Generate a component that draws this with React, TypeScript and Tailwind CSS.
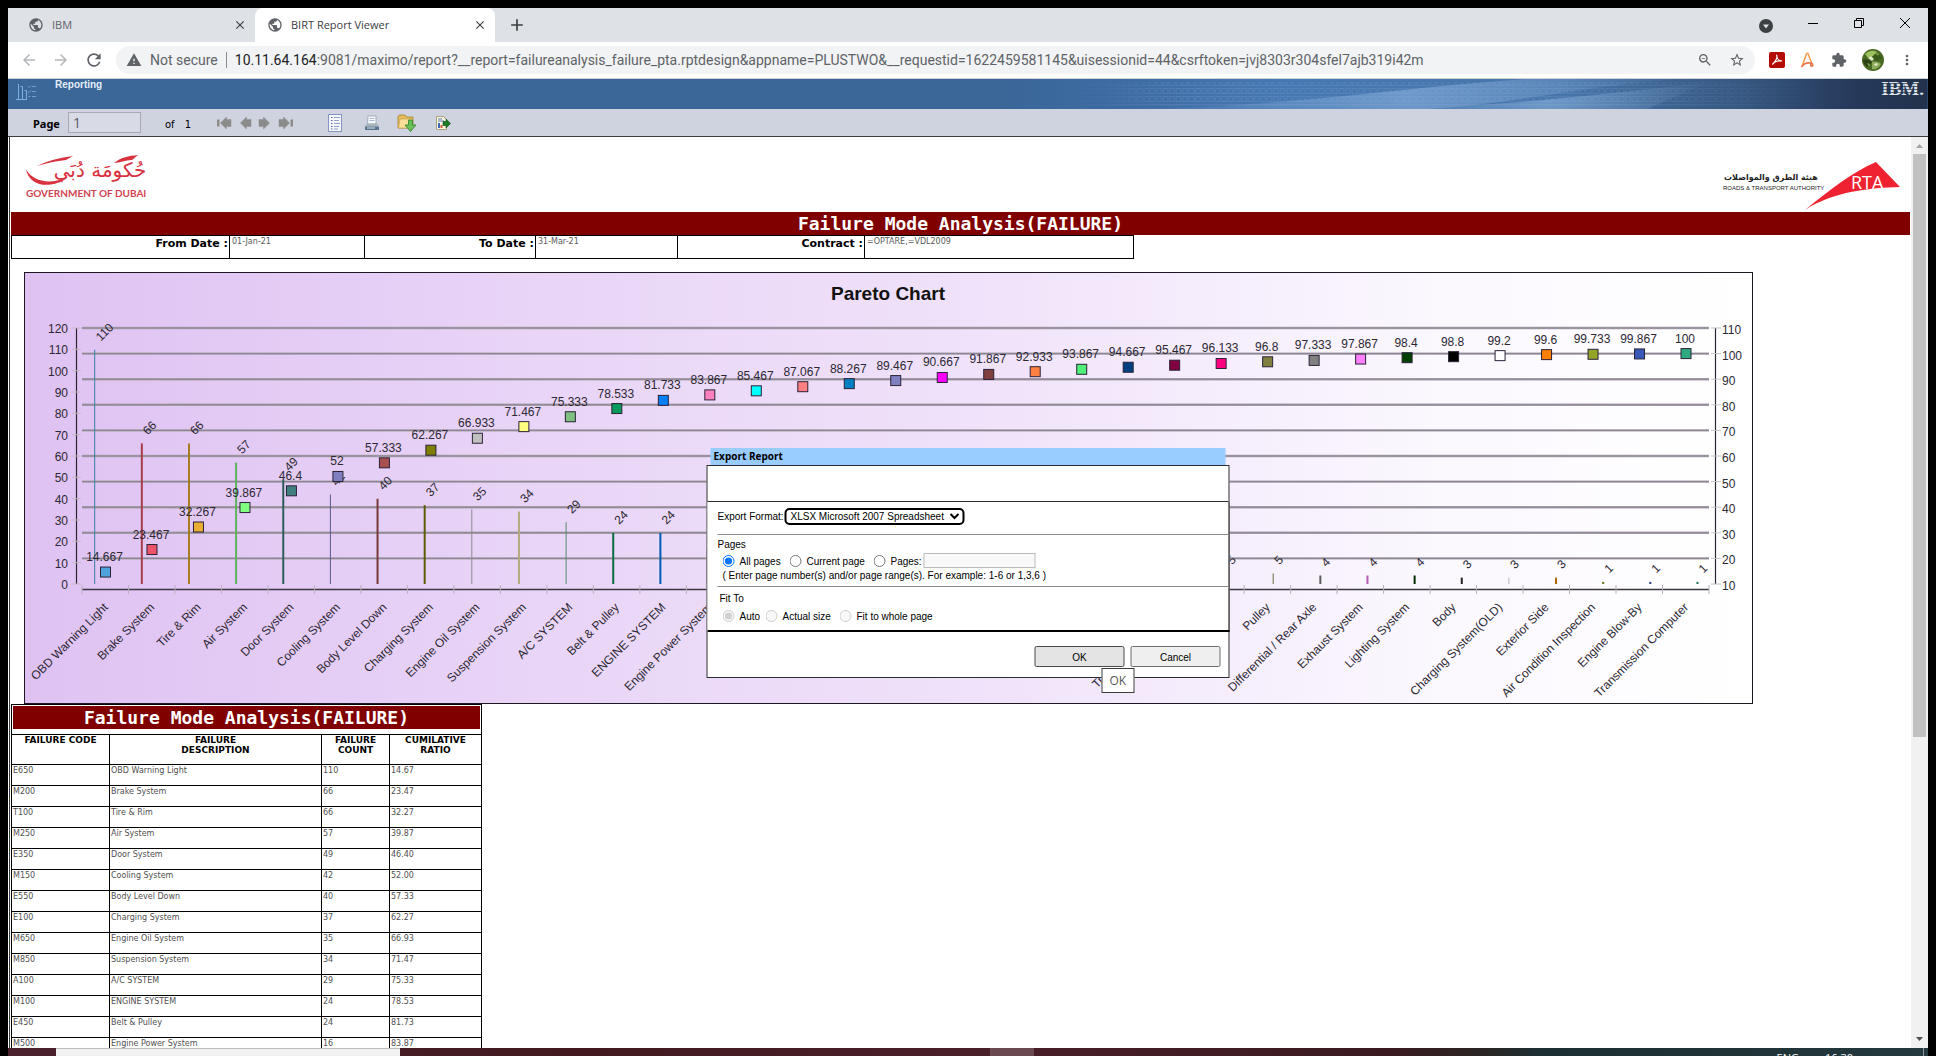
import React from "react";
import {
  MdPublic,
  MdClose,
  MdAdd,
  MdArrowBack,
  MdArrowForward,
  MdRefresh,
  MdWarning,
  MdExtension,
  MdMoreVert,
  MdStarBorder,
  MdZoomOut,
} from "react-icons/md";

type Item = { name: string; count: number; pct: number; color: string; bar: string };

const items: Item[] = [
  { name: "OBD Warning Light", count: 110, pct: 14.667, color: "#4fa3dc", bar: "#3b7ba6" },
  { name: "Brake System", count: 66, pct: 23.467, color: "#f05468", bar: "#a83c4b" },
  { name: "Tire & Rim", count: 66, pct: 32.267, color: "#eaae35", bar: "#a87c24" },
  { name: "Air System", count: 57, pct: 39.867, color: "#80ff80", bar: "#5cb35c" },
  { name: "Door System", count: 49, pct: 46.4, color: "#408080", bar: "#2c5c5c" },
  { name: "Cooling System", count: 42, pct: 52, color: "#8080c0", bar: "#5a5a8c" },
  { name: "Body Level Down", count: 40, pct: 57.333, color: "#a85050", bar: "#783838" },
  { name: "Charging System", count: 37, pct: 62.267, color: "#808000", bar: "#5c5c00" },
  { name: "Engine Oil System", count: 35, pct: 66.933, color: "#c0c0c0", bar: "#8c8c8c" },
  { name: "Suspension System", count: 34, pct: 71.467, color: "#ffff80", bar: "#b3ab7c" },
  { name: "A/C SYSTEM", count: 29, pct: 75.333, color: "#80c080", bar: "#5c8c6c" },
  { name: "Belt & Pulley", count: 24, pct: 78.533, color: "#089a5c", bar: "#056c40" },
  { name: "ENGINE SYSTEM", count: 24, pct: 81.733, color: "#0080ff", bar: "#005cb3" },
  { name: "Engine Power System", count: 16, pct: 83.867, color: "#ff80c0", bar: "#b35c88" },
  { name: "", count: 12, pct: 85.467, color: "#00ffff", bar: "#00b3b3" },
  { name: "", count: 12, pct: 87.067, color: "#ff8080", bar: "#b35c5c" },
  { name: "", count: 9, pct: 88.267, color: "#0080c0", bar: "#005c88" },
  { name: "", count: 9, pct: 89.467, color: "#8080c0", bar: "#5a5a8c" },
  { name: "", count: 9, pct: 90.667, color: "#ff00ff", bar: "#b300b3" },
  { name: "", count: 9, pct: 91.867, color: "#804040", bar: "#5c2c2c" },
  { name: "", count: 8, pct: 92.933, color: "#ff8040", bar: "#b35c2c" },
  { name: "", count: 7, pct: 93.867, color: "#50f078", bar: "#38a854" },
  { name: "", count: 6, pct: 94.667, color: "#004080", bar: "#002c5c" },
  { name: "Transmission System", count: 6, pct: 95.467, color: "#800040", bar: "#5c002c" },
  { name: "", count: 5, pct: 96.133, color: "#ff0080", bar: "#b3005c" },
  { name: "Pulley", count: 5, pct: 96.8, color: "#808040", bar: "#6c6c40" },
  { name: "Differential / Rear Axle", count: 4, pct: 97.333, color: "#808080", bar: "#5c5c5c" },
  { name: "Exhaust System", count: 4, pct: 97.867, color: "#ff80ff", bar: "#b35cb3" },
  { name: "Lighting System", count: 4, pct: 98.4, color: "#004000", bar: "#002c00" },
  { name: "Body", count: 3, pct: 98.8, color: "#000000", bar: "#222222" },
  { name: "Charging System(OLD)", count: 3, pct: 99.2, color: "#ffffff", bar: "#b3b3b3" },
  { name: "Exterior Side", count: 3, pct: 99.6, color: "#ff8000", bar: "#b36400" },
  { name: "Air Condition Inspection", count: 1, pct: 99.733, color: "#94a426", bar: "#68741a" },
  { name: "Engine Blow-By", count: 1, pct: 99.867, color: "#3858b8", bar: "#284084" },
  { name: "Transmission Computer", count: 1, pct: 100, color: "#30a880", bar: "#207858" },
];

const rows: [string, string, string, string][] = [
  ["E650", "OBD Warning Light", "110", "14.67"],
  ["M200", "Brake System", "66", "23.47"],
  ["T100", "Tire & Rim", "66", "32.27"],
  ["M250", "Air System", "57", "39.87"],
  ["E350", "Door System", "49", "46.40"],
  ["M150", "Cooling System", "42", "52.00"],
  ["E550", "Body Level Down", "40", "57.33"],
  ["E100", "Charging System", "37", "62.27"],
  ["M650", "Engine Oil System", "35", "66.93"],
  ["M850", "Suspension System", "34", "71.47"],
  ["A100", "A/C SYSTEM", "29", "75.33"],
  ["M100", "ENGINE SYSTEM", "24", "78.53"],
  ["E450", "Belt & Pulley", "24", "81.73"],
  ["M500", "Engine Power System", "16", "83.87"],
];

const LEFT = 58;
const RIGHT = 1685;
const TOP = 56;
const BOTTOM = 312;
const STEP = (RIGHT - LEFT) / items.length;

function ParetoChart() {
  const leftTicks = Array.from({ length: 13 }, (_, i) => i * 10);
  const rightTicks = Array.from({ length: 11 }, (_, i) => 10 + i * 10);
  const leftY = (v: number) => BOTTOM - (v / 120) * (BOTTOM - TOP);
  const rightY = (v: number) => BOTTOM - ((v - 10) / 100) * (BOTTOM - TOP);
  return (
    <svg
      viewBox="0 0 1729 432"
      className="block w-full font-['Liberation_Sans',Arial,sans-serif] text-[12px]"
      role="img"
      aria-label="Pareto Chart"
    >
      <defs>
        <linearGradient id="chartBg" x1="0" x2="1" y1="0" y2="0">
          <stop offset="0" stopColor="#dfc2f2" />
          <stop offset="0.28" stopColor="#e8d4f7" />
          <stop offset="0.55" stopColor="#f0e2fa" />
          <stop offset="0.82" stopColor="#fbf8fe" />
          <stop offset="1" stopColor="#ffffff" />
        </linearGradient>
      </defs>
      <rect x="0.5" y="0.5" width="1728" height="431" fill="url(#chartBg)" stroke="#1c1822" />
      <text x="864" y="28" textAnchor="middle" className="text-[19px] font-bold" fill="#111">
        Pareto Chart
      </text>

      {rightTicks.slice(1).map((t) => (
        <g key={t}>
          <line x1={LEFT} x2={RIGHT} y1={rightY(t)} y2={rightY(t)} stroke="#aaa2b0" strokeWidth="2.4" />
          <line x1={LEFT} x2={RIGHT} y1={rightY(t)} y2={rightY(t)} stroke="#8a848f" strokeWidth="1" />
        </g>
      ))}

      <line x1="52.5" x2="52.5" y1={TOP} y2={BOTTOM} stroke="#2b2730" strokeWidth="1.2" />
      <line x1="1691.5" x2="1691.5" y1={TOP} y2={BOTTOM} stroke="#2b2730" strokeWidth="1.2" />
      <line x1={LEFT} x2={RIGHT} y1="317.5" y2="317.5" stroke="#3b3740" strokeWidth="1.4" />

      {leftTicks.map((t) => (
        <g key={t}>
          <line x1="48" x2="57" y1={leftY(t)} y2={leftY(t)} stroke="#c4b8c8" />
          <text x="44" y={leftY(t) + 5} textAnchor="end" fill="#2c2833">
            {t}
          </text>
        </g>
      ))}
      {rightTicks.map((t) => (
        <g key={t}>
          <line x1="1687" x2="1697" y1={rightY(t)} y2={rightY(t)} stroke="#c4c0c8" />
          <text x="1698" y={rightY(t) + 6} fill="#2c2833">
            {t}
          </text>
        </g>
      ))}
      {Array.from({ length: items.length + 1 }, (_, i) => (
        <line
          key={i}
          x1={LEFT + i * STEP}
          x2={LEFT + i * STEP}
          y1="313"
          y2="322"
          stroke="#b9b0bd"
        />
      ))}

      {items.map((d, i) => {
        const x = 70.7 + i * 47.14;
        const y = BOTTOM - d.count * 2.13;
        return (
          <g key={i}>
            <line x1={x} x2={x} y1={y} y2={BOTTOM} stroke={d.bar} strokeWidth={i % 5 === 0 || i === 8 ? 1 : 2} />
            <text transform={`translate(${x + 6} ${y - 8}) rotate(-45)`} fill="#2c2833">
              {d.count}
            </text>
          </g>
        );
      })}
      {items.map((d, i) => {
        const x = 81.5 + i * STEP;
        const y = rightY(d.pct);
        return (
          <g key={i}>
            <rect x={x - 5} y={y - 5} width="10" height="10" fill={d.color} stroke="#2a2238" />
            <text x={x - 1} y={y - 11} textAnchor="middle" fill="#2c2833">
              {d.pct}
            </text>
            <text transform={`translate(${x + 3} 336) rotate(-45)`} textAnchor="end" fill="#2c2833">
              {d.name}
            </text>
          </g>
        );
      })}
    </svg>
  );
}

function Tab({ title, active }: { title: string; active?: boolean }) {
  return (
    <div
      className={
        active
          ? "flex w-60 items-center gap-2 rounded-t-lg bg-white pr-2 pl-3 text-[#3c4043]"
          : "flex w-[247px] items-center gap-2 pr-2 pl-5 text-[#5f6368]"
      }
    >
      <MdPublic className="size-4 text-[#5f6368]" />
      <span className="flex-1 text-[11px]">{title}</span>
      <button aria-label={`Close ${title}`}>
        <MdClose className="size-3.5 text-[#3c4043]" />
      </button>
    </div>
  );
}

function BrowserChrome() {
  return (
    <header className="font-['Open_Sans','Noto_Sans',sans-serif]">
      <div className="flex h-[34px] bg-[#dee1e6]">
        <Tab title="IBM" />
        <Tab title="BIRT Report Viewer" active />
        <button aria-label="New tab" className="ml-3">
          <MdAdd className="size-5 text-[#3c4043]" />
        </button>
        <div className="ml-auto flex items-center gap-[34px] pr-[17px] text-black">
          <svg viewBox="0 0 14 14" className="mt-px size-3.5">
            <circle cx="7" cy="7" r="7" fill="#3c4043" />
            <path d="M4 5.500h6L7 9.500z" fill="#dee1e6" />
          </svg>
          <button aria-label="Minimize" className="mb-1">
            <svg viewBox="0 0 12 12" className="size-3">
              <path d="M1 6.500h10" stroke="#000" />
            </svg>
          </button>
          <button aria-label="Restore" className="mb-1">
            <svg viewBox="0 0 12 12" className="size-3" fill="none" stroke="#000">
              <path d="M1.500 3.500h7v7h-7zM3.500 3.500v-2h7v7h-2" />
            </svg>
          </button>
          <button aria-label="Close" className="mb-1">
            <svg viewBox="0 0 12 12" className="size-3" stroke="#000">
              <path d="M1 1l10 10M11 1L1 11" />
            </svg>
          </button>
        </div>
      </div>
      <div className="flex h-[37px] items-center border-b border-[#d0d3d6] bg-white pr-[13px] pl-3 text-[#5f6368]">
        <button aria-label="Back" className="mr-3.5">
          <MdArrowBack className="size-[18px] text-[#b5b8bb]" />
        </button>
        <button aria-label="Forward" className="mr-3.5">
          <MdArrowForward className="size-[18px] text-[#b5b8bb]" />
        </button>
        <button aria-label="Reload" className="mr-3">
          <MdRefresh className="size-5" />
        </button>
        <div className="flex h-7 flex-1 items-center rounded-full bg-[#f1f3f4] px-2.5 font-['Roboto','Open_Sans',sans-serif] text-[14px]">
          <MdWarning className="size-4" />
          <span className="ml-2">Not secure</span>
          <span className="mx-2 h-4 w-px bg-[#8a8d91]" />
          <span className="flex-1">
            <span className="text-[#202124]">10.11.64.164</span>
            :9081/maximo/report?__report=failureanalysis_failure_pta.rptdesign&amp;appname=PLUSTWO&amp;__requestid=1622459581145&amp;uisessionid=44&amp;csrftoken=jvj8303r304sfel7ajb319i42m
          </span>
          <MdZoomOut className="mr-4 size-4" />
          <MdStarBorder className="size-4" />
        </div>
        <div className="ml-3.5 flex items-center gap-[15px]">
          <svg viewBox="0 0 16 16" className="size-4">
            <rect width="16" height="16" rx="2" fill="#b30b00" />
            <path
              d="M7.600 3.200c1 1.800-.3 5-4 9 1.500-2 5.500-3.600 9-3.300-2.500.2-4.600-2.300-5-5.700z"
              fill="none"
              stroke="#fff"
              strokeWidth="1.200"
              strokeLinejoin="round"
            />
          </svg>
          <svg viewBox="0 0 16 16" className="size-4" fill="none" strokeWidth="1.500" strokeLinecap="round">
            <path d="M2 14.500L6.500 2c.4-1 1.300-1 1.700 0l3.600 9.500" stroke="#f59a4a" />
            <path d="M2 14.500c2-3 5-4 8.500-3.500 2 .2 3 2 2 3s-2.500-.5-1.500-2" stroke="#f0704a" />
          </svg>
          <MdExtension className="size-4" />
          <svg viewBox="0 0 22 22" className="size-[22px]">
            <circle cx="11" cy="11" r="11" fill="#4a6a24" />
            <path d="M3 5c4-4 9-4 12-2l-4 4-5 2z" fill="#9cc05c" />
            <path d="M12 6c3-2 6 0 8 3l-5 3-5-2z" fill="#3a5a1c" />
            <path d="M1 11c3-2 6 0 9 2l-4 5c-3-1-5-4-5-7z" fill="#2c4218" />
            <path d="M10 13c4-1 7 0 9 2-2 4-6 6-9 5z" fill="#8cac5c" />
            <path d="M6 9l3-2 3 3-2 2zM12 15l3-1 1 2-3 1z" fill="#e0e8c8" />
            <path d="M14 3l3 2-2 2zM5 14l3 1-1 3z" fill="#7ca044" />
          </svg>
          <MdMoreVert className="size-4" />
        </div>
      </div>
    </header>
  );
}

function Banner() {
  return (
    <div className="relative flex h-[30px] shrink-0 items-start bg-[#3a6698] pl-2">
      <svg viewBox="0 0 920 30" preserveAspectRatio="none" className="absolute inset-y-0 right-0 h-full w-[48%]">
        <defs>
          <linearGradient id="bn" x1="0" x2="1">
            <stop offset="0" stopColor="#3a6698" />
            <stop offset="0.12" stopColor="#3d6ba2" />
            <stop offset="0.3" stopColor="#4678b2" />
            <stop offset="0.6" stopColor="#4775aa" />
            <stop offset="0.8" stopColor="#365780" />
            <stop offset="0.92" stopColor="#26395a" />
            <stop offset="1" stopColor="#22324c" />
          </linearGradient>
          <linearGradient id="sw" x1="0" x2="1">
            <stop offset="0" stopColor="#9cc0e8" stopOpacity="0" />
            <stop offset="0.5" stopColor="#9cc0e8" stopOpacity="0.45" />
            <stop offset="1" stopColor="#9cc0e8" stopOpacity="0" />
          </linearGradient>
          <linearGradient id="fade" x1="0" x2="1">
            <stop offset="0" stopColor="#000" />
            <stop offset="0.15" stopColor="#fff" />
            <stop offset="0.7" stopColor="#fff" />
            <stop offset="1" stopColor="#000" />
          </linearGradient>
          <pattern id="sq" width="6.500" height="8" patternUnits="userSpaceOnUse">
            <rect x="1" y="1.500" width="4.500" height="5" fill="none" stroke="#86aad6" strokeOpacity="0.25" />
          </pattern>
          <mask id="sqMask">
            <rect x="60" width="760" height="30" fill="url(#fade)" />
          </mask>
        </defs>
        <rect width="920" height="30" fill="url(#bn)" />
        <rect x="60" y="3" width="760" height="24" fill="url(#sq)" mask="url(#sqMask)" />
        <path d="M120 30C280 28 380 10 520 0H680C560 8 520 24 420 30z" fill="url(#sw)" />
        <path d="M380 30C520 26 600 14 700 4L640 30z" fill="url(#sw)" />
      </svg>
      <svg viewBox="0 0 20 18" className="mt-1 h-[18px] w-5" fill="none" stroke="#7fb0dc">
        <path d="M2.500 1v16M0 16.500h11M4.500 3.500h2v13M8.500 7.500h2v9" />
        <path d="M12 3.500l1 1 2-2M12 8.500l1 1 2-2M12.500 13.500h2M16 3.500h4M16 8.500h4M16 13.500h4" strokeWidth=".8" />
      </svg>
      <h1 className="ml-[19px] font-['Liberation_Sans',Arial,sans-serif] text-[10px] leading-3 font-bold text-[#e3eef8]">
        Reporting
      </h1>
      <div className="relative mt-0.5 mr-1 ml-auto flex font-['Liberation_Serif',serif] text-[19px] leading-4 font-bold text-[#dfe2e6]">
        IBM.
        <span className="absolute inset-0 bg-[repeating-linear-gradient(180deg,transparent_0_2px,#24354f_2px_3px)] opacity-70" />
      </div>
    </div>
  );
}

function NavArrow({ label, flip, end }: { label: string; flip?: boolean; end?: boolean }) {
  return (
    <button aria-label={label} disabled>
      <svg viewBox="0 0 16 12" className={flip ? "h-3 w-4 -scale-x-100" : "h-3 w-4"} fill="#8b8b8b">
        {end && <path d="M0 2.500h2.500v7H0z" />}
        <path d="M3.500 6l6-6v2.500H14v7H9.500V12z" stroke="#8b8b8b" strokeWidth=".5" strokeLinejoin="round" />
      </svg>
    </button>
  );
}

function ReportToolbar() {
  return (
    <div className="flex h-7 shrink-0 items-center border-b border-[#3c3c40] bg-[#cfd3df] pl-[25px] font-['DejaVu_Sans',Verdana,sans-serif] text-[10px] text-black">
      <label htmlFor="page" className="mt-1 w-[35px] font-['Noto_Sans',sans-serif] text-[11px] font-bold">
        Page
      </label>
      <input
        id="page"
        defaultValue="1"
        className="h-[21px] w-[73px] border border-[#a8aab0] bg-[#d8dbe5] px-1 font-['Open_Sans',sans-serif] text-[14px] text-[#5a5c64]"
      />
      <span className="mt-1 ml-6">of</span>
      <span className="mt-1 ml-2.5">1</span>
      <div className="ml-[26px] flex gap-1">
        <NavArrow label="First page" end />
        <NavArrow label="Previous page" />
        <NavArrow label="Next page" flip />
        <NavArrow label="Last page" flip end />
      </div>
      <button aria-label="Toggle table of contents" className="ml-[35px]">
        <svg viewBox="0 0 14 18" className="h-[18px] w-3.5">
          <rect x=".5" y=".5" width="13" height="17" fill="#f4f6fc" stroke="#8494c4" />
          <path d="M3 3.500h1.500M3 6.500h1.500M3 9.500h1.500M3 12.500h1.500M3 15h1.500" stroke="#5868a8" />
          <path d="M6 3.500h6M6 6.500h5M6 9.500h6M6 12.500h5M6 15h4" stroke="#94a4cc" />
        </svg>
      </button>
      <button aria-label="Print report" className="ml-[22px]">
        <svg viewBox="0 0 16 16" className="size-4">
          <path d="M4 1h8v8H3.500z" fill="#f8fafc" stroke="#90a0b8" strokeWidth=".8" />
          <path d="M5.500 3.500h5M5.500 5.500h5" stroke="#90a8d0" strokeWidth=".8" />
          <path d="M3 8.500h10l2 3H1z" fill="#a8b4bc" />
          <path d="M1 11.500h14V15H1z" fill="#58748c" />
          <path d="M3 13h8" stroke="#dce8f0" />
        </svg>
      </button>
      <button aria-label="Export data" className="ml-[17px]">
        <svg viewBox="0 0 20 18" className="h-[18px] w-5">
          <path d="M1 14V2l2-1h5l2 2h6v11z" fill="#e4bc5c" stroke="#a88434" strokeWidth=".8" />
          <path d="M3 5h13l-2 9H1.500z" fill="#f8e098" stroke="#c49c44" strokeWidth=".6" />
          <path d="M11.500 6h4v5h3.500l-5.500 6.500L8 11h3.500z" fill="#68c058" stroke="#2c7c28" strokeWidth=".8" />
        </svg>
      </button>
      <button aria-label="Export report" className="ml-[18px]">
        <svg viewBox="0 0 16 16" className="size-4">
          <path d="M1.500 1.500h7l3 3v10h-10z" fill="#fbf7e4" stroke="#a8a078" />
          <path d="M3 4h4M3 6h6" stroke="#5878b0" />
          <path d="M3 8h2v5H3z" fill="#3868b8" />
          <path d="M5.500 10h2v3h-2z" fill="#d05838" />
          <path d="M8 6.500h3V4l4.500 4.500L11 13v-2.500H8z" fill="#1e7a24" stroke="#0c4c14" strokeWidth=".6" />
        </svg>
      </button>
    </div>
  );
}

function Logos() {
  return (
    <div className="flex h-[75px] items-start justify-between pt-4 pr-2.5 pl-[15px]">
      <svg viewBox="0 0 124 48" className="h-12 w-[124px]">
        <path d="M0 16c7 13 24 16 42 8-14 12-39 11-42-8z" fill="#d8323f" />
        <path d="M11 13C23 7 34 5 47 3L40 7C30 8 21 10 11 13z" fill="#d8323f" />
        <path d="M88 10c8-6 14-7 24-8l-6 5c-7 0-12 3-18 3z" fill="#d8323f" />
        <text
          x="74"
          y="24"
          textAnchor="middle"
          direction="rtl"
          fill="#d8323f"
          className="font-['DejaVu_Sans',sans-serif] text-[20px]"
        >
          حُكومَة دُبَي
        </text>
        <text
          x="0"
          y="44"
          fill="#d04450"
          className="font-['Lato','Open_Sans',sans-serif] text-[10px] font-bold"
        >
          GOVERNMENT OF DUBAI
        </text>
      </svg>
      <svg viewBox="0 0 178 50" className="mt-[9px] h-[50px] w-[178px]">
        <text
          x="48"
          y="18"
          textAnchor="middle"
          direction="rtl"
          fill="#222"
          className="font-['DejaVu_Sans',sans-serif] text-[8px] font-bold"
        >
          هيئة الطرق والمواصلات
        </text>
        <text x="0" y="28" fill="#222" className="font-['Liberation_Sans',sans-serif] text-[6px]">
          ROADS &amp; TRANSPORT AUTHORITY
        </text>
        <path d="M153 0l24 25c-30 1-66 4-95 23C108 27 128 11 153 0z" fill="#ee2230" />
        <text x="128" y="27" fill="#fff" className="font-['Open_Sans',sans-serif] text-[18px]">
          RTA
        </text>
      </svg>
    </div>
  );
}

const paramLabel = "border border-black px-px text-right align-top text-[11px] leading-4 font-bold";
const paramValue = "border border-black px-0.5 pt-px text-left align-top text-[8px] leading-[10px] text-[#5a5a5a]";
const headCell = "h-[30px] border border-black align-top text-[9px] leading-[10px] font-bold text-black";
const bodyCell = "h-[21px] border border-black pt-px pl-px align-top leading-[10px]";

function ExportDialog() {
  return (
    <div
      role="dialog"
      aria-labelledby="export-title"
      className="absolute top-[311px] left-1/2 w-[523px] -translate-x-1/2 font-['Liberation_Sans',Arial,sans-serif] text-[10px] leading-3 text-black"
    >
      <h2
        id="export-title"
        className="mx-1 h-[17px] bg-[#99ccff] pl-[3px] font-['Open_Sans',sans-serif] text-[10px] leading-[17px] font-bold"
      >
        Export Report
      </h2>
      <div className="border border-[#2c2c30] bg-white">
        <div className="h-9 border-b border-[#2c2c30]" />
        <div className="-mr-px h-[130px] border-r border-b-2 border-black bg-white pt-2 pl-2.5">
          <div className="flex items-center">
            <label htmlFor="format" className="w-[69px] whitespace-nowrap">
              Export Format:
            </label>
            <select
              id="format"
              className="h-[13px] w-44 rounded-[3px] bg-white text-[10px] leading-[11px] outline-2 outline-black"
            >
              <option>XLSX Microsoft 2007 Spreadsheet</option>
            </select>
          </div>
          <hr className="mt-[11px] border-[#8c8c8c]" />
          <p className="mt-1">Pages</p>
          <div className="mt-0.5 flex items-center pl-[5px]">
            <label className="flex w-[67px] items-center gap-[5px]">
              <input type="radio" name="pages" defaultChecked className="size-3" />
              <span className="pt-0.5">All pages</span>
            </label>
            <label className="flex w-[84px] items-center gap-[5px]">
              <input type="radio" name="pages" className="size-3" />
              <span className="pt-0.5">Current page</span>
            </label>
            <label className="flex w-[46px] items-center gap-[5px] whitespace-nowrap">
              <input type="radio" name="pages" className="size-3" />
              <span className="pt-0.5">Pages:</span>
            </label>
            <input
              aria-label="Page range"
              disabled
              className="ml-1 h-[15px] w-28 border border-[#bbb] bg-[#f9f9f9]"
            />
          </div>
          <p className="mt-0.5 pl-[5px]">
            ( Enter page number(s) and/or page range(s). For example: 1-6 or 1,3,6 )
          </p>
          <hr className="mt-1 border-[#8c8c8c]" />
          <p className="mt-1.5 pl-0.5">Fit To</p>
          <div className="mt-1 flex items-center pl-[5px]">
            <label className="flex w-[43px] items-center gap-[5px]">
              <input type="radio" name="fit" defaultChecked disabled className="size-3" />
              <span className="pt-0.5">Auto</span>
            </label>
            <label className="flex w-[74px] items-center gap-[5px]">
              <input type="radio" name="fit" disabled className="size-3" />
              <span className="pt-0.5">Actual size</span>
            </label>
            <label className="flex items-center gap-[5px]">
              <input type="radio" name="fit" disabled className="size-3" />
              <span className="pt-0.5">Fit to whole page</span>
            </label>
          </div>
        </div>
        <div className="flex h-[45px] items-start justify-end gap-1.5 pt-3.5 pr-2">
          <button className="relative h-[21px] w-[90px] rounded-[2px] border border-[#4a4a4a] bg-[#e4e4e4] pt-0.5">
            OK
            <span
              role="tooltip"
              className="absolute top-[21px] left-[66px] border border-[#3c3c3c] bg-white px-[7px] font-['Open_Sans',sans-serif] text-[12px] leading-[23px] text-[#575757]"
            >
              OK
            </span>
          </button>
          <button className="h-[21px] w-[90px] rounded-[2px] border border-[#6c6c6c] bg-[#efefef] pt-0.5">
            Cancel
          </button>
        </div>
      </div>
    </div>
  );
}

function Report() {
  return (
    <main className="ml-px min-w-0 flex-1 overflow-hidden border-l border-[#3c3c40] bg-white pl-px font-['DejaVu_Sans',Verdana,sans-serif]">
      <Logos />
      <h2 className="mr-px bg-[#800000] text-center font-['DejaVu_Sans_Mono',monospace] text-[18px] leading-[23px] font-bold text-white">
        Failure Mode Analysis(FAILURE)
      </h2>
      <table className="h-6 w-[1123px] table-fixed border-collapse">
        <colgroup>
          <col className="w-[218px]" />
          <col className="w-[135px]" />
          <col className="w-[171px]" />
          <col className="w-[142px]" />
          <col className="w-[187px]" />
          <col />
        </colgroup>
        <tbody>
          <tr>
            <th scope="row" className={paramLabel}>From Date :</th>
            <td className={paramValue}>01-Jan-21</td>
            <th scope="row" className={paramLabel}>To Date :</th>
            <td className={paramValue}>31-Mar-21</td>
            <th scope="row" className={paramLabel}>Contract :</th>
            <td className={paramValue}>=OPTARE,=VDL2009</td>
          </tr>
        </tbody>
      </table>
      <div className="mt-[13px] ml-[13px] w-[91%]">
        <ParetoChart />
      </div>
      <table className="w-[471px] table-fixed border-collapse text-[8px] text-[#505050]">
        <colgroup>
          <col className="w-[98px]" />
          <col className="w-[212px]" />
          <col className="w-[68px]" />
          <col />
        </colgroup>
        <thead>
          <tr>
            <th colSpan={4} className="h-[30px] border border-black p-px align-top">
              <div className="bg-[#800000] font-['DejaVu_Sans_Mono',monospace] text-[18px] leading-[23px] font-bold text-white">
                Failure Mode Analysis(FAILURE)
              </div>
            </th>
          </tr>
          <tr>
            <th className={headCell}>FAILURE CODE</th>
            <th className={headCell}>
              FAILURE
              <br />
              DESCRIPTION
            </th>
            <th className={headCell}>
              FAILURE
              <br />
              COUNT
            </th>
            <th className={headCell}>
              CUMILATIVE
              <br />
              RATIO
            </th>
          </tr>
        </thead>
        <tbody>
          {rows.map((r) => (
            <tr key={r[0]}>
              {r.map((c, i) => (
                <td key={i} className={bodyCell}>
                  {c}
                </td>
              ))}
            </tr>
          ))}
        </tbody>
      </table>
    </main>
  );
}

function Scrollbar() {
  return (
    <div className="flex w-[17px] shrink-0 flex-col items-center bg-[#f1f1f1]">
      <svg viewBox="0 0 17 17" className="size-[17px]">
        <path d="M5 11h7l-3.500-4z" fill="#a3a3a3" />
      </svg>
      <div className="h-[64%] w-[13px] bg-[#c1c1c1]" />
      <svg viewBox="0 0 17 17" className="mt-auto size-[17px]">
        <path d="M5 6h7l-3.500 4z" fill="#505050" />
      </svg>
    </div>
  );
}

function Taskbar() {
  return (
    <footer className="flex h-2 shrink-0 overflow-hidden bg-[linear-gradient(90deg,#4c212e_0%,#43191f_30%,#4a1f2a_50%,#3a1a20_72%,#2a2524_77%,#1c2f33_80%,#24393d_100%)] font-['Open_Sans',sans-serif] text-[11px] leading-[14px] text-white">
      <div className="ml-12 h-full w-[344px] border-t border-[#bdbdbd] bg-[#f2f2f2]" />
      <div className="ml-[590px] h-full w-11 bg-[#6a4a50]" />
      <span className="mt-[3px] ml-auto">ENG</span>
      <span className="mt-[3px] mr-[70px] ml-[26px]">16:30</span>
      <span className="mr-1 w-px bg-[#8a9496]" />
    </footer>
  );
}

export default function App() {
  return (
    <div className="flex h-screen flex-col overflow-hidden bg-black px-2 pt-2">
      <BrowserChrome />
      <Banner />
      <ReportToolbar />
      <section className="relative flex min-h-0 flex-1 bg-white">
        <Report />
        <Scrollbar />
        <ExportDialog />
      </section>
      <Taskbar />
    </div>
  );
}
